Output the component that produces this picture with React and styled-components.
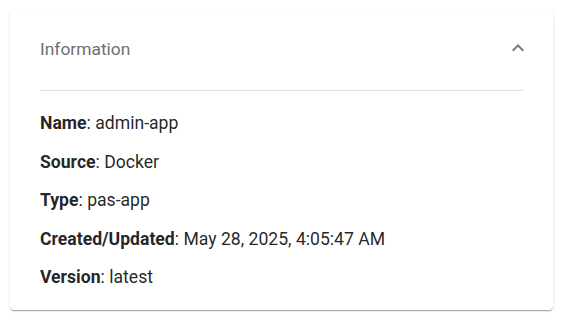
import React from "react";
import styled, { createGlobalStyle } from "styled-components";

const Global = createGlobalStyle`
  html, body { margin: 0; padding: 0; background: #ffffff; }
  body { font-family: Roboto, "Liberation Sans", sans-serif; }
`;

const Page = styled.div`
  padding: 10px;
`;

const Card = styled.section`
  width: 543px;
  box-sizing: border-box;
  background: #fff;
  border-radius: 4px;
  box-shadow: 0px 2px 1px -1px rgba(0,0,0,0.2), 0px 1px 1px 0px rgba(0,0,0,0.14), 0px 1px 3px 0px rgba(0,0,0,0.12);
  padding: 0 30px 21px;
`;

const Header = styled.div`
  display: flex;
  align-items: center;
  justify-content: space-between;
  padding: 27px 0 29px;
  border-bottom: 1px solid #e0e0e0;
`;

const Title = styled.h2`
  margin: 0;
  font-size: 17.4px;
  font-weight: 400;
  line-height: 24px;
  color: #6e6f76;
`;

const Toggle = styled.span`
  display: flex;
  width: 24px;
  height: 24px;
  margin-right: -7px;
  margin-top: -3px;
  color: rgba(0,0,0,0.54);
`;

const List = styled.div`
  display: flex;
  flex-direction: column;
  gap: 14.5px;
  padding-top: 20px;
`;

const Row = styled.div`
  font-size: 17.6px;
  line-height: 24px;
  color: rgba(0,0,0,0.87);
`;

const Label = styled.b`
  font-weight: 700;
`;

const items = [
  ["Name", "admin-app"],
  ["Source", "Docker"],
  ["Type", "pas-app"],
  ["Created/Updated", "May 28, 2025, 4:05:47 AM"],
  ["Version", "latest"],
];

export default function App() {
  return (
    <Page>
      <Global />
      <Card>
        <Header>
          <Title>Information</Title>
          <Toggle>
            <svg viewBox="0 0 24 24" width="24" height="24" fill="currentColor">
              <path d="M12 8l-6 6 1.41 1.41L12 10.83l4.59 4.58L18 14z" />
            </svg>
          </Toggle>
        </Header>
        <List>
          {items.map(([k, v]) => (
            <Row key={k}>
              <Label>{k}</Label>: {v}
            </Row>
          ))}
        </List>
      </Card>
    </Page>
  );
}
